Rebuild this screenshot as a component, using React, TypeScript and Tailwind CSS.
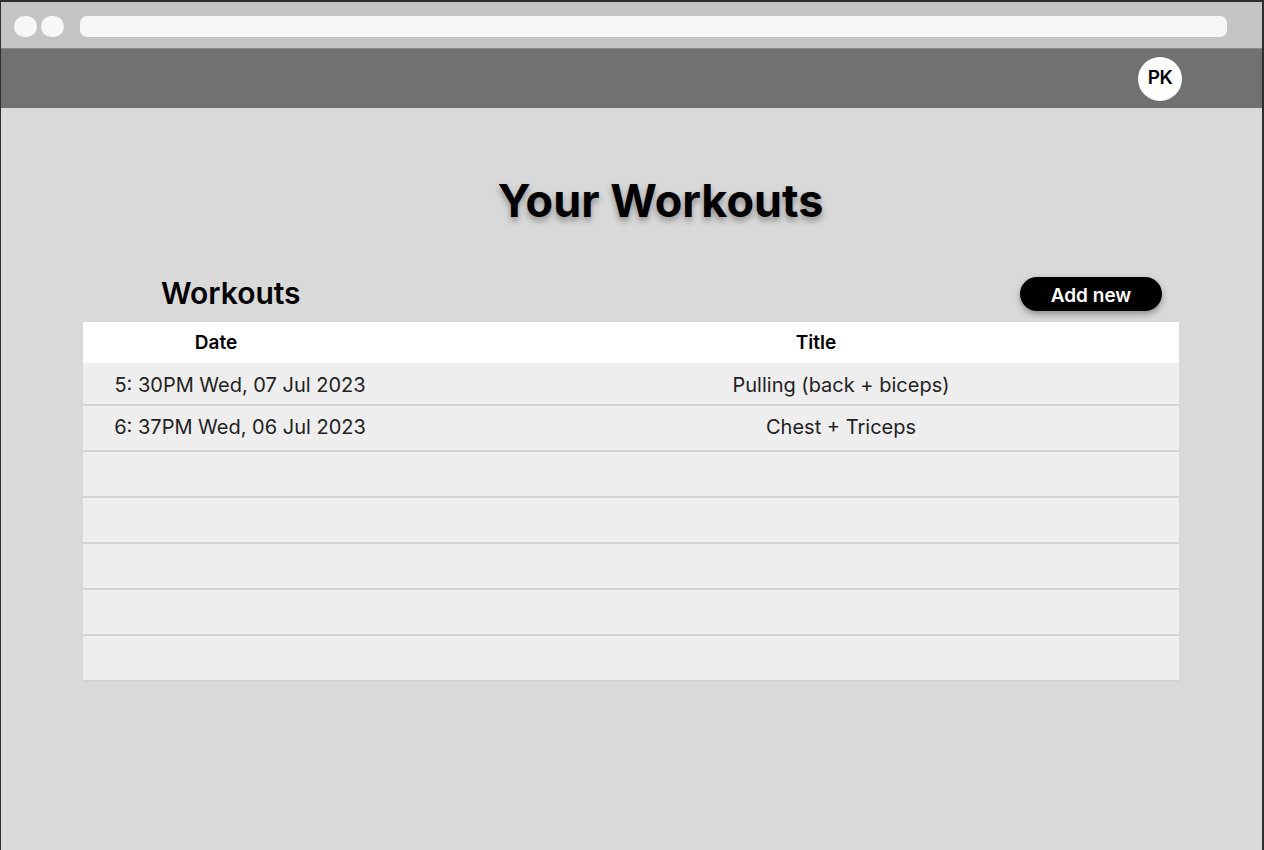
import React from 'react';

const workouts = [
  { date: '5: 30PM Wed, 07 Jul 2023', title: 'Pulling (back + biceps)' },
  { date: '6: 37PM Wed, 06 Jul 2023', title: 'Chest + Triceps' },
  { date: '', title: '' },
  { date: '', title: '' },
  { date: '', title: '' },
  { date: '', title: '' },
  { date: '', title: '' },
];

const App: React.FC = () => {
  return (
    <div
      className="w-[1264px] h-[850px] overflow-hidden bg-[#d9d9d9] border-t-2 border-l border-r-2 border-[#2e2e2e] flex flex-col"
      style={{ fontFamily: 'Inter, "Noto Sans", sans-serif' }}
    >
      {/* Browser chrome */}
      <div className="h-[46px] bg-[#c4c4c4] flex items-start pt-[14px] pl-[13px] pr-[35px] shrink-0">
        <div className="flex items-center gap-[4px]">
          <div className="w-[23px] h-[21px] rounded-full bg-[#f7f7f7]" />
          <div className="w-[23px] h-[21px] rounded-full bg-[#f7f7f7]" />
        </div>
        <div className="ml-[16px] flex-1 h-[21px] rounded-[7px] bg-[#f6f6f6]" />
      </div>

      {/* App header */}
      <header className="h-[60px] bg-[#717171] border-t border-[#8a8a8a] flex items-center justify-end pr-[80px] shrink-0">
        <div className="w-[44px] h-[44px] rounded-full bg-white flex items-center justify-center">
          <span className="text-[19px] font-semibold text-black tracking-tight">PK</span>
        </div>
      </header>

      <main className="flex-1 flex flex-col">
        <h1
          className="mt-[65px] text-center text-[45px] leading-[56px] font-bold text-black pl-[58px]"
          style={{ textShadow: '0 4px 6px rgba(0,0,0,0.35)' }}
        >
          Your Workouts
        </h1>

        <div className="mt-[46px] flex items-end justify-between pl-[160px] pr-[100px]">
          <h2 className="text-[30px] leading-[36px] font-semibold text-black mb-[11px]">Workouts</h2>
          <button className="w-[142px] h-[34px] rounded-full bg-black text-white text-[19px] font-semibold shadow-[0_3px_6px_rgba(0,0,0,0.35)] mb-[11px] pt-[4px]">
            Add new
          </button>
        </div>

        <div className="ml-[82px] w-[1096px]">
          <div className="grid grid-cols-[266px_1fr] h-[41px] bg-white items-center pt-[1px]">
            <div className="text-center text-[19px] font-semibold text-black">Date</div>
            <div className="text-center text-[19px] font-semibold text-black pl-[104px]">Title</div>
          </div>
          {workouts.map((w, i) => (
            <div
              key={i}
              className={`grid grid-cols-[314px_1fr] items-center bg-[#eeeeee] border-b-2 border-[#d2d2d2] ${i === 0 ? 'h-[43px] pt-[3px]' : 'h-[46px] pb-[2px]'}`}
            >
              <div className="text-center text-[20px] text-[#222]">{w.date}</div>
              <div className="text-center text-[20px] text-[#222] pl-[106px]">{w.title}</div>
            </div>
          ))}
        </div>
      </main>
    </div>
  );
};

export default App;
